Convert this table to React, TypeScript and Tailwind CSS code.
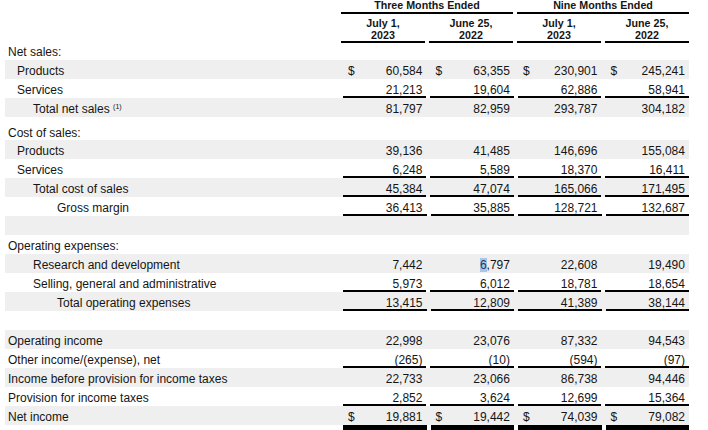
import React from "react";

type Cell = { v: string; d?: boolean; u?: boolean; hl?: boolean };
type Row = {
  label: React.ReactNode;
  indent: number;
  gray?: boolean;
  cells?: Cell[];
  h?: string;
  pt?: string;
};

const c = (v: string, d = false, u = false): Cell => ({ v, d, u });

const rows: Row[] = [
  { label: "Net sales:", indent: 8, h: "h-[17px]", pt: "pt-[2px]" },
  { label: "Products", indent: 17, gray: true, cells: [c("60,584", true), c("63,355", true), c("230,901", true), c("245,241", true)] },
  { label: "Services", indent: 17, cells: [c("21,213", false, true), c("19,604", false, true), c("62,886", false, true), c("58,941", false, true)] },
  {
    label: (
      <span>
        Total net sales <span className="text-[7px] relative top-[-4px]">(1)</span>
      </span>
    ),
    indent: 33,
    gray: true,
    cells: [c("81,797"), c("82,959"), c("293,787"), c("304,182")],
  },
  { label: "Cost of sales:", indent: 8, h: "h-[23px]", pt: "pt-[9px]" },
  { label: "Products", indent: 17, gray: true, cells: [c("39,136"), c("41,485"), c("146,696"), c("155,084")] },
  { label: "Services", indent: 17, cells: [c("6,248", false, true), c("5,589", false, true), c("18,370", false, true), c("16,411", false, true)] },
  { label: "Total cost of sales", indent: 33, gray: true, cells: [c("45,384", false, true), c("47,074", false, true), c("165,066", false, true), c("171,495", false, true)] },
  { label: "Gross margin", indent: 57, cells: [c("36,413", false, true), c("35,885", false, true), c("128,721", false, true), c("132,687", false, true)] },
  { label: "", indent: 8, gray: true },
  { label: "Operating expenses:", indent: 8 },
  { label: "Research and development", indent: 33, gray: true, cells: [c("7,442"), { v: "6,797", hl: true }, c("22,608"), c("19,490")] },
  { label: "Selling, general and administrative", indent: 33, cells: [c("5,973", false, true), c("6,012", false, true), c("18,781", false, true), c("18,654", false, true)] },
  { label: "Total operating expenses", indent: 57, gray: true, cells: [c("13,415", false, true), c("12,809", false, true), c("41,389", false, true), c("38,144", false, true)] },
  { label: "", indent: 8 },
  { label: "Operating income", indent: 8, gray: true, cells: [c("22,998"), c("23,076"), c("87,332"), c("94,543")] },
  { label: "Other income/(expense), net", indent: 8, cells: [c("(265)", false, true), c("(10)", false, true), c("(594)", false, true), c("(97)", false, true)] },
  { label: "Income before provision for income taxes", indent: 8, gray: true, cells: [c("22,733"), c("23,066"), c("86,738"), c("94,446")] },
  { label: "Provision for income taxes", indent: 8, cells: [c("2,852", false, true), c("3,624", false, true), c("12,699", false, true), c("15,364", false, true)] },
  { label: "Net income", indent: 8, gray: true, cells: [c("19,881", true), c("19,442", true), c("74,039", true), c("79,082", true)] },
];

function NumCell({ cell, pt }: { cell?: Cell; pt: string }) {
  return (
    <div
      className={
        "w-[84px] h-full flex items-center justify-between pl-[5px] pr-[4px] " +
        pt +
        " " +
        (cell?.u ? "shadow-[inset_0_-2px_0_#000]" : "")
      }
    >
      <span>{cell?.d ? "$" : ""}</span>
      <span>
        {cell?.hl ? (
          <>
            <span className="bg-[#a9c6ea] text-[#1b3a66]">{cell.v[0]}</span>
            {cell.v.slice(1)}
          </>
        ) : (
          cell?.v
        )}
      </span>
    </div>
  );
}

export default function App() {
  return (
    <div
      className="w-[708px] h-[430px] bg-white text-[#151515] overflow-hidden"
      style={{ fontFamily: "'Liberation Sans', Arial, sans-serif" }}
    >
      <div className="ml-[5px] w-[684px] text-[12px] leading-[15px]">
        {/* Header */}
        <div className="flex gap-[4px] pl-[336px] font-bold text-[10.7px] leading-[11px]">
          <div className="w-[172px] h-[14px] flex justify-center pt-[0px] shadow-[inset_0_-2px_0_#000]">
            Three Months Ended
          </div>
          <div className="w-[172px] h-[14px] flex justify-center pt-[0px] shadow-[inset_0_-2px_0_#000]">
            Nine Months Ended
          </div>
        </div>
        <div className="flex gap-[4px] pl-[336px] font-bold text-[10.7px] leading-[12px]">
          {[
            ["July 1,", "2023"],
            ["June 25,", "2022"],
            ["July 1,", "2023"],
            ["June 25,", "2022"],
          ].map((d, i) => (
            <div
              key={i}
              className="w-[84px] h-[29px] flex flex-col items-center pt-[3px] shadow-[inset_0_-2px_0_#000]"
            >
              <span>{d[0]}</span>
              <span>{d[1]}</span>
            </div>
          ))}
        </div>
        {/* Body */}
        {rows.map((r, i) => {
          const pt = r.pt ?? "pt-[4px]";
          return (
            <div
              key={i}
              className={
                "flex gap-[4px] " +
                (r.h ?? "h-[19px]") +
                " " +
                (r.gray ? "bg-[#efefef]" : "")
              }
            >
              <div
                className={"w-[336px] h-full flex items-center " + pt}
                style={{ paddingLeft: r.indent - 5 }}
              >
                {r.label}
              </div>
              {r.cells ? (
                r.cells.map((cell, j) => <NumCell key={j} cell={cell} pt={pt} />)
              ) : (
                <>
                  <div className="w-[84px]" />
                  <div className="w-[84px]" />
                  <div className="w-[84px]" />
                  <div className="w-[84px]" />
                </>
              )}
            </div>
          );
        })}
        <div className="flex gap-[4px] h-[5px]">
          <div className="w-[336px]" />
          <div className="w-[84px] bg-black" />
          <div className="w-[84px] bg-black" />
          <div className="w-[84px] bg-black" />
          <div className="w-[84px] bg-black" />
        </div>
      </div>
    </div>
  );
}
